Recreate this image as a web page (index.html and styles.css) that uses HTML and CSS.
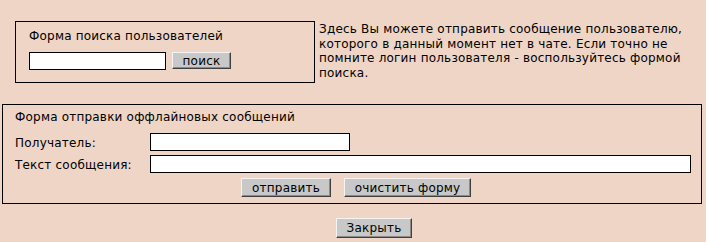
FILE: index.html
```html
<!DOCTYPE html>
<html lang="ru">
<head>
<meta charset="utf-8">
<title>Оффлайновые сообщения</title>
<link rel="stylesheet" href="styles.css">
</head>
<body>
<div class="top">
  <div class="search-box">
    <div class="box-title">Форма поиска пользователей</div>
    <div class="search-row">
      <input type="text" class="field field-search">
      <button type="button" class="btn btn-search">поиск</button>
    </div>
  </div>
  <p class="info">Здесь Вы можете отправить сообщение пользователю, которого в данный момент нет в чате. Если точно не помните логин пользователя - воспользуйтесь формой поиска.</p>
</div>
<div class="send-box">
  <div class="box-title">Форма отправки оффлайновых сообщений</div>
  <div class="send-grid">
    <label class="lbl">Получатель:</label>
    <input type="text" class="field field-to">
    <label class="lbl">Текст сообщения:</label>
    <input type="text" class="field field-text">
  </div>
  <div class="send-buttons">
    <button type="button" class="btn btn-send">отправить</button>
    <button type="button" class="btn btn-clear">очистить форму</button>
  </div>
</div>
<div class="close-row">
  <button type="button" class="btn btn-close">Закрыть</button>
</div>
</body>
</html>
```
FILE: styles.css
```css
html, body {
  margin: 0;
  padding: 0;
}
body {
  background: #efd5c6;
  color: #000;
  font-family: "DejaVu Sans", Verdana, sans-serif;
  font-size: 12px;
  letter-spacing: 0.2px;
  line-height: 14px;
  width: 706px;
  height: 242px;
  overflow: hidden;
}
.top {
  display: flex;
  align-items: flex-start;
  padding: 21px 0 0 15px;
}
.search-box {
  box-sizing: border-box;
  width: 300px;
  height: 62px;
  border: 1px solid #000;
  padding: 7px 0 0 13px;
  flex: none;
}
.box-title {
  white-space: nowrap;
}
.search-row {
  display: flex;
  align-items: flex-start;
  margin-top: 9px;
}
.field {
  box-sizing: border-box;
  height: 18px;
  border: 1px solid #000;
  background: #fff;
  margin: 0;
  padding: 0 2px;
  font: inherit;
  outline: none;
}
.field-search {
  width: 137px;
}
.btn {
  box-sizing: border-box;
  margin: 0;
  padding: 0;
  background: #c8c8c8;
  color: #000;
  font-family: inherit;
  font-size: 12px;
  letter-spacing: 0.2px;
  line-height: 14px;
  border-style: solid;
  border-width: 1px;
  border-color: #f4f4f4 #404040 #404040 #f4f4f4;
  box-shadow: inset -1px -1px 0 #8a8a8a;
  border-radius: 0;
  cursor: pointer;
}
.btn-search {
  width: 59px;
  height: 17px;
  margin-left: 6px;
}
.info {
  margin: 1px 0 0 4px;
  width: 380px;
  line-height: 14.5px;
}
.send-box {
  box-sizing: border-box;
  width: 700px;
  height: 100px;
  margin: 21px 0 0 2px;
  border: 1px solid #000;
  padding: 5px 0 0 12px;
}
.send-grid {
  display: grid;
  grid-template-columns: 135px auto;
  grid-auto-rows: 18px;
  row-gap: 4px;
  align-items: center;
  justify-items: start;
  margin-top: 9px;
}
.lbl {
  white-space: nowrap;
  padding-top: 2px;
  line-height: 16px;
}
.field-to {
  width: 200px;
}
.field-text {
  width: 541px;
}
.send-buttons {
  display: flex;
  gap: 13px;
  margin: 5px 0 0 226px;
}
.btn-send {
  width: 90px;
  height: 19px;
}
.btn-clear {
  width: 127px;
  height: 19px;
}
.close-row {
  display: flex;
  padding: 14px 0 0 336px;
}
.btn-close {
  width: 76px;
  height: 20px;
}
```
